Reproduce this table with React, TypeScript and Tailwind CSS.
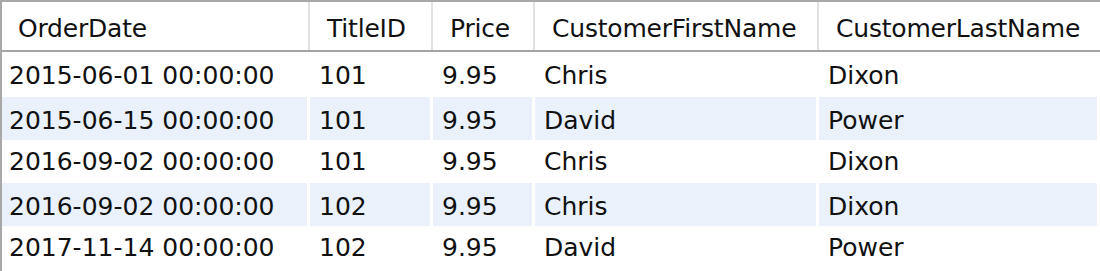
const columns = [
  "OrderDate",
  "TitleID",
  "Price",
  "CustomerFirstName",
  "CustomerLastName",
];

const rows = [
  ["2015-06-01 00:00:00", "101", "9.95", "Chris", "Dixon"],
  ["2015-06-15 00:00:00", "101", "9.95", "David", "Power"],
  ["2016-09-02 00:00:00", "101", "9.95", "Chris", "Dixon"],
  ["2016-09-02 00:00:00", "102", "9.95", "Chris", "Dixon"],
  ["2017-11-14 00:00:00", "102", "9.95", "David", "Power"],
];

const gridCols = "grid grid-cols-[308px_123px_102px_284px_1fr]";

export default function App() {
  return (
    <div
      className="h-[271px] w-[1100px] overflow-hidden border-t-2 border-l-2 border-[#a8a8a8] bg-white text-[25px] text-[#111111]"
      style={{ fontFamily: '"DejaVu Sans", Verdana, sans-serif' }}
    >
      <div className={`${gridCols} h-[50px] border-b-2 border-[#a3a3a3]`}>
        {columns.map((col, i) => (
          <div
            key={col}
            className={`flex items-center whitespace-nowrap pt-[5px] tracking-[-0.2px] ${
              i < columns.length - 1 ? "border-r-2 border-[#e2e2e2]" : ""
            } ${i === 0 ? "pl-[16px]" : "pl-[17px]"}`}
          >
            {col}
          </div>
        ))}
      </div>

      {rows.map((row, r) => (
        <div key={r} className={`${gridCols} h-[43px]`}>
          {row.map((cell, c) => (
            <div
              key={c}
              className={`flex items-center whitespace-nowrap pt-[5px] ${
                r % 2 === 1 ? "bg-[#eaf1fb] my-[2px] mr-[3px]" : ""
              } ${c === 0 ? "pl-[7px]" : "pl-[9px]"}`}
            >
              {cell}
            </div>
          ))}
        </div>
      ))}
    </div>
  );
}
